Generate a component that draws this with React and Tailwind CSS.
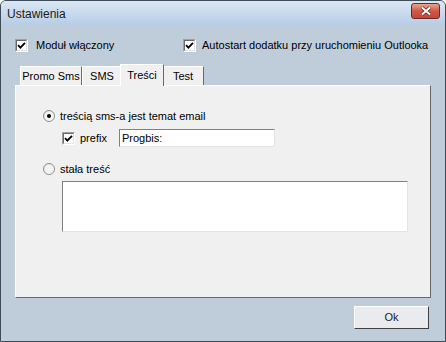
const font = { fontFamily: '"Liberation Sans", Arial, sans-serif' }

const CheckBox = ({ checked }) => (
  <div className='w-[13px] h-[13px] shrink-0 border border-t-[#a0a0a0] border-l-[#a0a0a0] border-b-white border-r-white'>
    <div className='w-full h-full border border-t-[#696969] border-l-[#696969] border-b-[#e3e3e3] border-r-[#e3e3e3] bg-white flex items-center justify-center'>
      {checked && (
        <svg width='9' height='9' viewBox='0 0 9 9'>
          <path d='M1 4.2 L3.4 6.6 L8 1.8' fill='none' stroke='#000' strokeWidth='1.9' />
        </svg>
      )}
    </div>
  </div>
)

const Radio = ({ checked }) => (
  <div className='w-[12px] h-[12px] shrink-0 rounded-full border border-[#8e8f8f] bg-gradient-to-br from-[#e0e0e0] to-white flex items-center justify-center'>
    <div className='w-[8px] h-[8px] rounded-full bg-[#f4f4f4] flex items-center justify-center'>
      {checked && <div className='w-[4px] h-[4px] rounded-full bg-black' />}
    </div>
  </div>
)

const Tab = ({ label, width, selected }) =>
  selected ? (
    <div
      className={`${width} h-[22px] -mx-[2px] relative z-10 -mb-px bg-[#f0f0f0] border-t border-l border-white border-r border-r-[#696969] flex items-start justify-center pt-[2px]`}
    >
      {label}
    </div>
  ) : (
    <div
      className={`${width} h-[19px] bg-[#f0f0f0] border-t border-l border-white border-r border-r-[#696969] flex items-center justify-center`}
    >
      {label}
    </div>
  )

export default function App() {
  return (
    <div
      style={font}
      className='w-[446px] h-[342px] bg-[#bfcddb] border border-[#3d4a58] rounded-t-[6px] flex flex-col overflow-hidden text-[11px] text-black'
    >
      {/* title bar */}
      <div className='h-[24px] shrink-0 bg-gradient-to-b from-[#dbe7f4] to-[#b7cde6] flex items-center justify-between pl-[6px] pr-[5px]'>
        <span className='text-[12px] text-[#1c1c1c] mt-px'>Ustawienia</span>
        <div className='w-[29px] h-[16px] mt-[-4px] rounded-[3px] border border-[#6b2a22] bg-gradient-to-b from-[#e8a593] via-[#cf5846] to-[#c1493a] flex items-center justify-center'>
          <svg width='12' height='10' viewBox='0 0 12 10'>
            <path d='M2 1.5 L10 8.5 M10 1.5 L2 8.5' stroke='#5a1c14' strokeWidth='3.2' />
            <path d='M2 1.5 L10 8.5 M10 1.5 L2 8.5' stroke='#fff' strokeWidth='2' />
          </svg>
        </div>
      </div>

      <div className='flex-1 flex flex-col px-[14px]'>
        {/* top checkboxes */}
        <div className='flex items-center mt-[14px] h-[13px]'>
          <div className='flex items-center gap-[8px] w-[168px]'>
            <CheckBox checked />
            <span>Moduł włączony</span>
          </div>
          <div className='flex items-center gap-[6px]'>
            <CheckBox checked />
            <span>Autostart dodatku przy uruchomieniu Outlooka</span>
          </div>
        </div>

        {/* tabs */}
        <div className='flex items-end mt-[11px] pl-[5px] h-[22px]'>
          <Tab label='Promo Sms' width='w-[62px]' />
          <Tab label='SMS' width='w-[40px]' />
          <Tab label='Treści' width='w-[44px]' selected />
          <Tab label='Test' width='w-[42px]' />
        </div>

        {/* tab panel */}
        <div className='w-[416px] h-[213px] bg-[#f0f0f0] border-t border-l border-white border-r border-b border-r-[#696969] border-b-[#696969] pl-[27px] pt-[22px] flex flex-col'>
          <div className='flex items-center gap-[5px] h-[16px]'>
            <Radio checked />
            <span>treścią sms-a jest temat email</span>
          </div>
          <div className='flex items-center mt-[5px] pl-[19px] h-[18px]'>
            <CheckBox checked />
            <span className='ml-[5px] w-[39px]'>prefix</span>
            <div className='w-[156px] h-[18px] bg-white border border-t-[#808080] border-l-[#808080] border-b-[#e3e3e3] border-r-[#e3e3e3] flex items-center pl-[2px]'>
              Progbis:
            </div>
          </div>
          <div className='flex items-center gap-[5px] h-[16px] mt-[14px]'>
            <Radio />
            <span>stała treść</span>
          </div>
          <div className='ml-[19px] mt-[4px] w-[346px] h-[51px] bg-white border border-t-[#808080] border-l-[#808080] border-b-[#e3e3e3] border-r-[#e3e3e3]' />
        </div>

        {/* footer */}
        <div className='flex justify-end mt-[8px] pr-[2px]'>
          <button className='w-[75px] h-[23px] bg-[#e9ebee] border border-t-white border-l-white border-b-[#404040] border-r-[#404040] text-[11px] text-[#1c1c1c]'>
            Ok
          </button>
        </div>
      </div>
    </div>
  )
}
